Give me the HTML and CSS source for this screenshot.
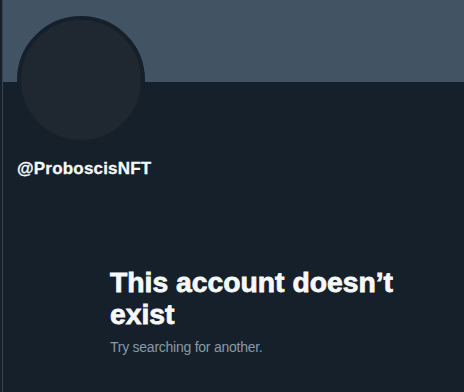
FILE: index.html
```html
<!DOCTYPE html>
<html>
<head>
<meta charset="utf-8">
<link rel="stylesheet" href="styles.css">
</head>
<body>
<div class="column">
  <div class="banner"></div>
  <div class="avatar"></div>
  <div class="handle">@ProboscisNFT</div>
  <div class="empty">
    <h1 class="empty-title">This account doesn’t exist</h1>
    <p class="empty-sub">Try searching for another.</p>
  </div>
</div>
</body>
</html>
```
FILE: styles.css
```css
html, body {
  margin: 0;
  padding: 0;
  background: #15202b;
  height: 100%;
  overflow: hidden;
}
.column {
  margin-left: 2px;
  border-left: 1px solid #38444d;
  height: 392px;
  font-family: "Liberation Sans", Arial, sans-serif;
  color: #f7f9f9;
}
.banner {
  height: 82px;
  background: #425364;
}
.avatar {
  width: 120px;
  height: 120px;
  border-radius: 50%;
  border: 4px solid #15202b;
  background: #1f2731;
  margin-top: -66px;
  margin-left: 14px;
}
.handle {
  margin-top: 15px;
  margin-left: 14px;
  font-size: 17px;
  line-height: 20px;
  font-weight: 700;
  letter-spacing: 0.2px;
  -webkit-text-stroke: 0.3px #f7f9f9;
}
.empty {
  margin-top: 87px;
  padding-left: 107px;
  width: 300px;
}
.empty-title {
  margin: 0;
  font-size: 28.3px;
  line-height: 32px;
  font-weight: 800;
  -webkit-text-stroke: 0.8px #f7f9f9;
}
.empty-sub {
  margin: 7px 0 0;
  font-size: 14px;
  line-height: 20px;
  color: #8b98a5;
  letter-spacing: -0.25px;
}
```
